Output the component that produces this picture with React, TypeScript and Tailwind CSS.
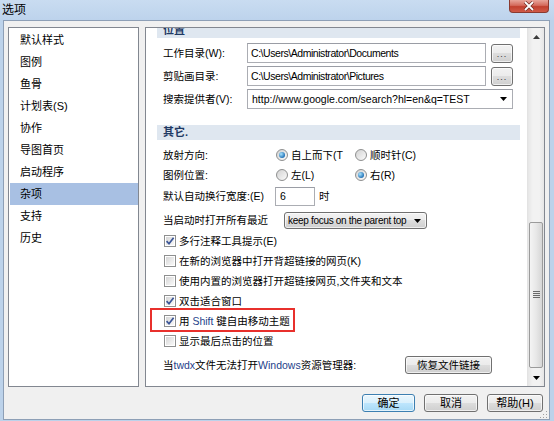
import React from "react";

function Checkbox({ checked }: { checked?: boolean }) {
  return (
    <span className="relative flex h-[12px] w-[12px] shrink-0 items-center justify-center border border-[#8e8f8f] bg-white">
      <span className="absolute inset-[1px] bg-[linear-gradient(135deg,#d6d6d6,#f9f9f9)]" />
      {checked && (
        <svg className="relative" width="10" height="10" viewBox="0 0 10 10">
          <path d="M1.6 5.2 L4 7.8 L8.6 1.8" fill="none" stroke="#3a5597" strokeWidth="1.7" />
        </svg>
      )}
    </span>
  );
}

function Radio({ checked }: { checked?: boolean }) {
  return (
    <span className="flex h-[12px] w-[12px] shrink-0 items-center justify-center rounded-full border border-[#8e8f8f] bg-[linear-gradient(135deg,#d2d2d2,#fbfbfb)]">
      {checked && (
        <span className="h-[6px] w-[6px] rounded-full bg-[radial-gradient(circle_at_35%_35%,#a9e4ff,#1c6db3_75%)]" />
      )}
    </span>
  );
}

function Btn({ children, cls, primary }: { children: React.ReactNode; cls: string; primary?: boolean }) {
  return (
    <div
      className={
        primary
          ? "flex items-center justify-center rounded-[3px] border border-[#3c7fb1] bg-[linear-gradient(#eaf6fd_0%,#d9f0fc_50%,#bee6fd_50%,#a7d9f5_100%)] shadow-[inset_0_0_0_1px_#ffffffaa] " + cls
          : "flex items-center justify-center rounded-[3px] border border-[#707070] bg-[linear-gradient(#f2f2f2_0%,#ebebeb_50%,#dddddd_50%,#cfcfcf_100%)] shadow-[inset_0_0_0_1px_#ffffffaa] " + cls
      }
    >
      {children}
    </div>
  );
}

function DownTri() {
  return (
    <svg className="shrink-0" width="7" height="4" viewBox="0 0 7 4">
      <path d="M0 0 H7 L3.5 4 Z" fill="#000" />
    </svg>
  );
}

const blue = "text-[#25428a]";

export default function App() {
  const items = ["默认样式", "图例", "鱼骨", "计划表(S)", "协作", "导图首页", "启动程序", "杂项", "支持", "历史"];
  return (
    <div className="relative flex h-[421px] w-[554px] flex-col overflow-hidden bg-[#bcd2ea] pb-[1px] font-['Liberation_Sans','Noto_Sans_CJK_SC',sans-serif] text-[10.5px] leading-none whitespace-nowrap text-black">
      {/* title bar */}
      <div className="relative h-[20px] shrink-0 bg-[linear-gradient(#c9dcf1,#bdd3ec)]">
        <div className="pl-[2px] pt-[3px] text-[12px] leading-[14px] text-black">选项</div>
        <div className="absolute right-[5px] top-0 flex h-[13px] w-[40px] items-center justify-center rounded-b-[4px] border border-t-0 border-[#8a3a30] bg-[linear-gradient(#e8a59a_0%,#d46a5c_45%,#c2402f_55%,#d05a48_100%)]">
          <svg width="12" height="10" viewBox="0 0 12 10">
            <path d="M2 1 L10 9 M10 1 L2 9" stroke="#6b2a22" strokeWidth="3.2" />
            <path d="M2 1 L10 9 M10 1 L2 9" stroke="#ffffff" strokeWidth="1.8" />
          </svg>
        </div>
      </div>

      {/* client area */}
      <div className="relative ml-[3px] mr-[4px] flex flex-1 flex-col border border-[#8d9fb6] bg-[#f0f0f0] px-[4px] pt-[6px]">
        <div className="flex h-[360px] gap-[6px]">
          {/* left list */}
          <div className="w-[131px] border border-[#828790] bg-white py-px text-[11px]">
            {items.map((t) => (
              <div
                key={t}
                className={
                  t === "杂项"
                    ? "ml-px flex h-[22px] items-center bg-[#a8c0e3] pl-[10px]"
                    : "flex h-[22px] items-center pl-[11px]"
                }
              >
                {t}
              </div>
            ))}
          </div>

          {/* right panel */}
          <div className="flex w-[400px] border border-[#828790] bg-white">
            <div className="flex flex-1 flex-col overflow-hidden pl-[11px] pr-[7px]">
              {/* header 1 */}
              <div className="-mt-[5px] flex h-[15px] shrink-0 items-center bg-[#dfe7f0] pl-[6px] text-[11px] font-bold text-[#1f3a64]">
                位置
              </div>
              <div className="mt-[5px] flex h-[20px] items-center">
                <div className="w-[90px] pl-[6px]">工作目录(W):</div>
                <div className="flex h-[20px] w-[239px] items-center border border-[#abadb3] border-t-[#9a9da5] bg-white pl-[3px] tracking-[-0.45px]">
                  C:\Users\Administrator\Documents
                </div>
                <Btn cls="ml-[5px] h-[19px] w-[22px] items-end pb-[3px]">
                  <span className="text-[9px] leading-none tracking-[1px] text-[#333]">...</span>
                </Btn>
              </div>
              <div className="mt-[3px] flex h-[20px] items-center">
                <div className="w-[90px] pl-[6px]">剪贴画目录:</div>
                <div className="flex h-[20px] w-[239px] items-center border border-[#abadb3] border-t-[#9a9da5] bg-white pl-[3px] tracking-[-0.45px]">
                  C:\Users\Administrator\Pictures
                </div>
                <Btn cls="ml-[5px] h-[19px] w-[22px] items-end pb-[3px]">
                  <span className="text-[9px] leading-none tracking-[1px] text-[#333]">...</span>
                </Btn>
              </div>
              <div className="mt-[3px] flex h-[20px] items-center">
                <div className="w-[90px] pl-[6px]">搜索提供者(V):</div>
                <div className="flex h-[20px] w-[266px] items-center justify-between border border-[#abadb3] border-t-[#9a9da5] bg-white pl-[4px] pr-[5px]">
                  <span>http://www.google.com/search?hl=en&amp;q=TEST</span>
                  <DownTri />
                </div>
              </div>

              {/* header 2 */}
              <div className="mt-[16px] flex h-[15px] shrink-0 items-center bg-[#dfe7f0] pl-[6px] text-[11px] font-bold text-[#1f3a64]">
                其它.
              </div>
              <div className="mt-[5px] flex h-[20px] items-center">
                <div className="w-[119px] pl-[6px]">放射方向:</div>
                <div className="flex w-[79px] items-center gap-[3px]">
                  <Radio checked />
                  <span>自上而下(T</span>
                </div>
                <div className="flex items-center gap-[3px]">
                  <Radio />
                  <span>顺时针(C)</span>
                </div>
              </div>
              <div className="flex h-[20px] items-center">
                <div className="w-[119px] pl-[6px]">图例位置:</div>
                <div className="flex w-[79px] items-center gap-[3px]">
                  <Radio />
                  <span>左(L)</span>
                </div>
                <div className="flex items-center gap-[3px]">
                  <Radio checked />
                  <span>右(R)</span>
                </div>
              </div>
              <div className="mt-[2px] flex h-[19px] items-center">
                <div className="w-[118px] pl-[6px]">默认自动换行宽度:(E)</div>
                <div className="flex h-[19px] w-[40px] items-center border border-[#abadb3] border-t-[#9a9da5] bg-white pl-[4px]">
                  6
                </div>
                <span className="ml-[4px]">时</span>
              </div>
              <div className="mt-[6px] flex h-[17px] items-center">
                <div className="w-[127px] pl-[6px]">当启动时打开所有最近</div>
                <Btn cls="h-[17px] w-[143px] overflow-hidden pl-[3px] pr-[5px]">
                  <span className="flex-1 text-left text-[10px] tracking-[-0.3px]">keep focus on the parent top</span>
                  <DownTri />
                </Btn>
              </div>

              <div className="mt-[2px] flex h-[20px] items-center gap-[3px] pl-[7px]">
                <Checkbox checked />
                <span>多行注释工具提示(E)</span>
              </div>
              <div className="flex h-[20px] items-center gap-[3px] pl-[7px]">
                <Checkbox />
                <span>在新的浏览器中打开背超链接的网页(K)</span>
              </div>
              <div className="flex h-[20px] items-center gap-[3px] pl-[7px]">
                <Checkbox />
                <span>使用内置的浏览器打开超链接网页,文件夹和文本</span>
              </div>
              <div className="flex h-[20px] items-center gap-[3px] pl-[7px]">
                <Checkbox checked />
                <span>双击适合窗口</span>
              </div>
              <div className="relative flex h-[20px] items-center gap-[3px] pl-[7px]">
                <Checkbox checked />
                <span>
                  用 <span className={blue}>Shift</span> 键自由移动主题
                </span>
                <div className="absolute -top-[3px] left-[-7px] h-[24px] w-[145px] border-2 border-[#e8302c]" />
              </div>
              <div className="flex h-[20px] items-center gap-[3px] pl-[7px]">
                <Checkbox />
                <span>显示最后点击的位置</span>
              </div>
              <div className="mt-[4px] flex h-[20px] items-center">
                <div className="w-[248px] pl-[6px]">
                  当<span className={blue}>twdx</span>文件无法打开<span className={blue}>Windows</span>资源管理器:
                </div>
                <Btn cls="h-[18px] w-[87px]">恢复文件链接</Btn>
              </div>
            </div>

            {/* scrollbar */}
            <div className="flex w-[17px] shrink-0 flex-col border-l border-[#e3e3e3] bg-[linear-gradient(90deg,#e6e6e6,#f2f2f2_30%,#f2f2f2_70%,#e6e6e6)]">
              <div className="flex h-[17px] shrink-0 items-center justify-center">
                <svg width="7" height="4" viewBox="0 0 7 4">
                  <path d="M0 4 H7 L3.5 0 Z" fill="#3c3c3c" />
                </svg>
              </div>
              <div className="h-[177px] shrink-0" />
              <div className="mx-[1px] flex h-[146px] shrink-0 items-center justify-center rounded-[2px] border border-[#9b9b9b] bg-[linear-gradient(90deg,#f4f4f4,#e8e8e8_50%,#d6d6d6)]">
                <svg width="7" height="8" viewBox="0 0 7 8">
                  <path d="M0 0.5 H7 M0 2.5 H7 M0 4.5 H7 M0 6.5 H7" stroke="#6a6a6a" strokeWidth="1" />
                </svg>
              </div>
              <div className="flex-1" />
              <div className="flex h-[17px] shrink-0 items-center justify-center">
                <DownTri />
              </div>
            </div>
          </div>
        </div>

        {/* buttons */}
        <div className="mt-[7px] flex justify-end gap-[9px] pr-[2px] text-[11px]">
          <Btn primary cls="h-[18px] w-[53px]">确定</Btn>
          <Btn cls="h-[18px] w-[54px]">取消</Btn>
          <Btn cls="h-[18px] w-[56px]">帮助(H)</Btn>
        </div>
        <svg className="absolute bottom-[1px] right-[1px]" width="8" height="8" viewBox="0 0 8 8">
          <path d="M6 1h1v1h-1zM6 4h1v1h-1zM3 4h1v1h-1zM6 7h1v1h-1zM3 7h1v1h-1zM0 7h1v1h-1z" fill="#a0a0a0" />
        </svg>
      </div>
    </div>
  );
}
